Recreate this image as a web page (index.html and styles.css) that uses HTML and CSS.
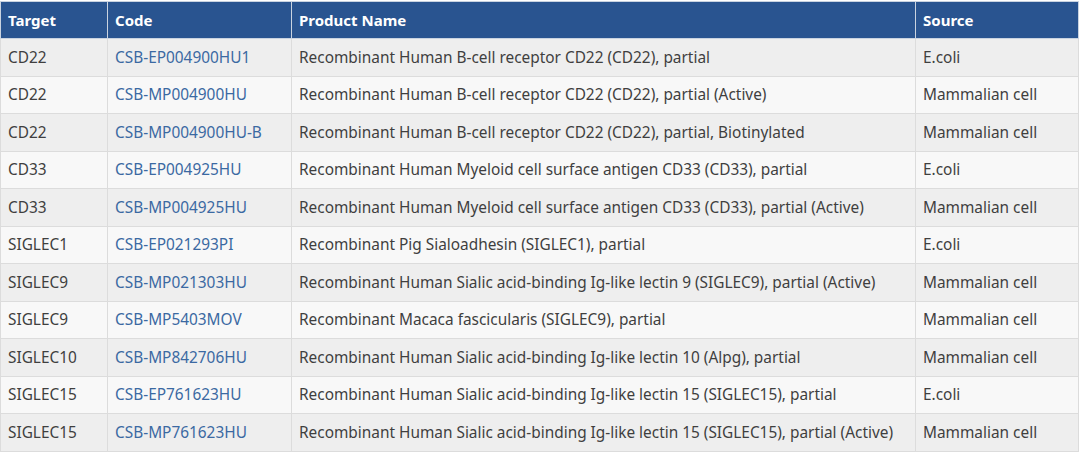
FILE: index.html
```html
<!DOCTYPE html>
<html>
<head>
<meta charset="utf-8">
<link rel="stylesheet" href="styles.css">
</head>
<body>
<table class="grid">
  <colgroup>
    <col class="c-target"><col class="c-code"><col class="c-name"><col class="c-source">
  </colgroup>
  <thead>
    <tr><th>Target</th><th>Code</th><th>Product Name</th><th>Source</th></tr>
  </thead>
  <tbody>
    <tr><td>CD22</td><td class="code">CSB-EP004900HU1</td><td>Recombinant Human B-cell receptor CD22 (CD22), partial</td><td>E.coli</td></tr>
    <tr><td>CD22</td><td class="code">CSB-MP004900HU</td><td>Recombinant Human B-cell receptor CD22 (CD22), partial (Active)</td><td>Mammalian cell</td></tr>
    <tr><td>CD22</td><td class="code">CSB-MP004900HU-B</td><td>Recombinant Human B-cell receptor CD22 (CD22), partial, Biotinylated</td><td>Mammalian cell</td></tr>
    <tr><td>CD33</td><td class="code">CSB-EP004925HU</td><td>Recombinant Human Myeloid cell surface antigen CD33 (CD33), partial</td><td>E.coli</td></tr>
    <tr><td>CD33</td><td class="code">CSB-MP004925HU</td><td>Recombinant Human Myeloid cell surface antigen CD33 (CD33), partial (Active)</td><td>Mammalian cell</td></tr>
    <tr><td>SIGLEC1</td><td class="code">CSB-EP021293PI</td><td>Recombinant Pig Sialoadhesin (SIGLEC1), partial</td><td>E.coli</td></tr>
    <tr><td>SIGLEC9</td><td class="code">CSB-MP021303HU</td><td>Recombinant Human Sialic acid-binding Ig-like lectin 9 (SIGLEC9), partial (Active)</td><td>Mammalian cell</td></tr>
    <tr><td>SIGLEC9</td><td class="code">CSB-MP5403MOV</td><td>Recombinant Macaca fascicularis (SIGLEC9), partial</td><td>Mammalian cell</td></tr>
    <tr><td>SIGLEC10</td><td class="code">CSB-MP842706HU</td><td>Recombinant Human Sialic acid-binding Ig-like lectin 10 (Alpg), partial</td><td>Mammalian cell</td></tr>
    <tr><td>SIGLEC15</td><td class="code">CSB-EP761623HU</td><td>Recombinant Human Sialic acid-binding Ig-like lectin 15 (SIGLEC15), partial</td><td>E.coli</td></tr>
    <tr><td>SIGLEC15</td><td class="code">CSB-MP761623HU</td><td>Recombinant Human Sialic acid-binding Ig-like lectin 15 (SIGLEC15), partial (Active)</td><td>Mammalian cell</td></tr>
  </tbody>
</table>
</body>
</html>
```
FILE: styles.css
```css
html, body {
  margin: 0;
  padding: 0;
  background: #ffffff;
}
body {
  padding-top: 1px;
  font-family: "Noto Sans", "Open Sans", sans-serif;
  font-size: 15.4px;
  color: #3f3f3f;
}
.grid {
  border-collapse: collapse;
  table-layout: fixed;
  width: 1078px;
}
.c-target { width: 107px; }
.c-code { width: 184px; }
.c-name { width: 624px; }
.c-source { width: 163px; }
.grid th, .grid td {
  border: 1px solid #dcdcdc;
  padding: 0 7px;
  text-align: left;
  white-space: nowrap;
  overflow: hidden;
}
.grid th {
  background: #295490;
  color: #ffffff;
  font-weight: 700;
  font-size: 15px;
  height: 36px;
  border-color: #c9d3e0;
}
.grid td {
  height: 36.5px;
}
.grid tbody tr:nth-child(odd) td { background: #eeeeee; }
.grid tbody tr:nth-child(even) td { background: #f8f8f8; }
.grid td.code { color: #3b69a2; }
```
